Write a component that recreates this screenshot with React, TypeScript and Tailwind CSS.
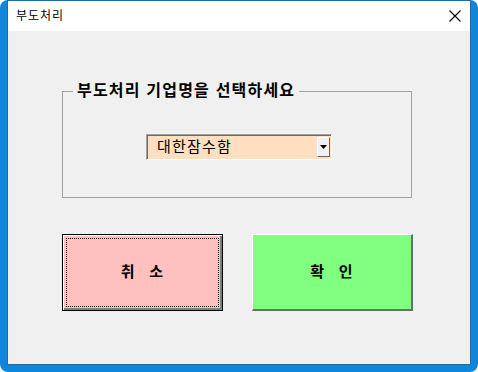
import React from 'react';

const font = "font-['Liberation_Sans','Noto_Sans_CJK_KR',sans-serif]";

const CloseIcon = () => (
  <svg width="12" height="12" viewBox="0 0 12 12" className="block">
    <path d="M0.5 0.5 L11.5 11.5 M11.5 0.5 L0.5 11.5" stroke="#000" strokeWidth="1.1" fill="none" />
  </svg>
);

const CompanySelect = () => (
  <div className="ml-[83px] mt-[33px] flex h-[26px] w-[186px] border-t border-l border-t-[#a0a0a0] border-l-[#a0a0a0] border-b border-r border-b-white border-r-white bg-[#ffdfbf] shadow-[inset_1px_1px_0_#696969]">
    <span className="flex-1 pl-[10px] pt-[1px] text-[15px] leading-[22px] tracking-[1.2px] text-black">대한잠수함</span>
    <div className="mt-[2px] mr-[1px] flex h-[20px] w-[13px] items-center justify-center border-t border-l border-t-white border-l-white border-b border-r border-b-[#696969] border-r-[#696969] bg-[#f0f0f0]">
      <svg width="7" height="4" viewBox="0 0 7 4" className="block">
        <path d="M0 0 H7 L3.5 4 Z" fill="#000" />
      </svg>
    </div>
  </div>
);

export default function App() {
  return (
    <div className={`h-[372px] w-[478px] rounded-[8px] bg-[#0e86dc] px-[8px] pt-[1px] pb-[8px] ${font}`}>
      <div className="flex h-[363px] w-[462px] flex-col bg-[#f0f0f0] shadow-[0_0_0_1px_#1f6aa8]">
        {/* title bar */}
        <div className="flex h-[30px] items-center justify-between bg-white pl-[8px] pr-[9px]">
          <span className="text-[12px] leading-none tracking-[1px] text-black">부도처리</span>
          <CloseIcon />
        </div>

        <fieldset className="mt-[50px] ml-[54px] h-[117px] w-[350px] border border-[#a0a0a0] rounded-none">
          <legend className="ml-[10px] px-[4px] text-[16px] font-bold leading-[20px] tracking-[1.2px] text-black">
            부도처리 기업명을 선택하세요
          </legend>
          <CompanySelect />
        </fieldset>

        <div className="mt-[36px] ml-[54px] flex gap-[29px]">
          <button className="flex h-[77px] w-[161px] items-center justify-center border border-black bg-[#ffc0c0] p-[3px] shadow-[inset_1px_1px_0_#fff,inset_-2px_-2px_0_#808080]">
            <span className="flex h-full w-full items-center justify-center border border-dotted border-black pl-[4px] text-[15px] font-bold tracking-[0.35em] text-black">
              취 소
            </span>
          </button>
          <button className="flex h-[77px] w-[161px] items-center justify-center border-t border-l border-t-white border-l-white border-b-2 border-r-2 border-b-[#6d6d6d] border-r-[#6d6d6d] bg-[#80ff80] pl-[4px] text-[15px] font-bold tracking-[0.35em] text-black">
            확 인
          </button>
        </div>
      </div>
    </div>
  );
}
